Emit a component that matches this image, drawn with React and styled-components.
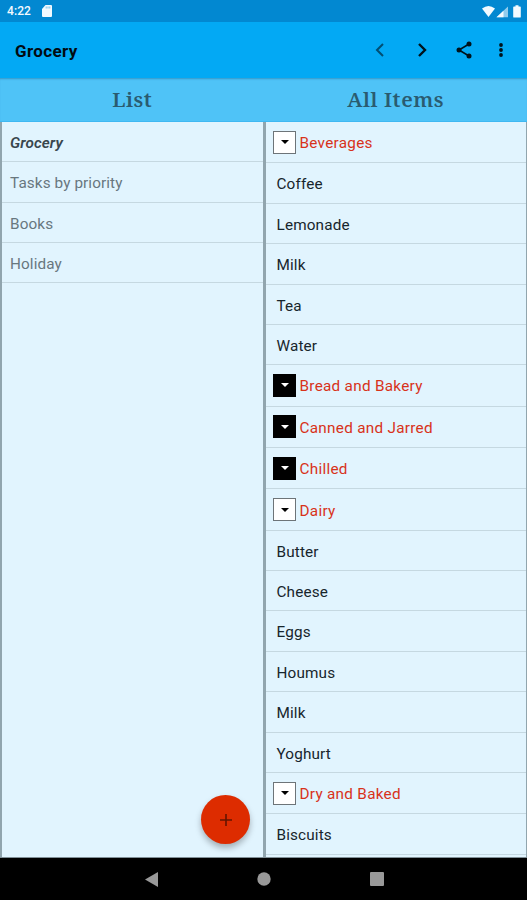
import React from "react";
import styled, { createGlobalStyle } from "styled-components";

const GlobalStyle = createGlobalStyle`
  * {
    box-sizing: border-box;
  }
  body {
    margin: 0;
    font-family: Roboto, sans-serif;
    background: #000;
  }
`;

const Screen = styled.div`
  display: flex;
  flex-direction: column;
  width: 527px;
  height: 900px;
  overflow: hidden;
`;

const StatusBar = styled.div`
  display: flex;
  align-items: center;
  flex: 0 0 22px;
  padding: 0 6px 0 7px;
  background: #0288d1;
  color: #f2faff;
`;

const Clock = styled.span`
  width: 35px;
  font-size: 12px;
  font-weight: 500;
  line-height: 22px;
  letter-spacing: 0.1px;
`;

const StatusIcons = styled.div`
  display: flex;
  align-items: center;
  margin-left: auto;
`;

const Toolbar = styled.header`
  display: flex;
  align-items: center;
  flex: 0 0 56px;
  padding: 0 10px 0 15px;
  background: #03a9f4;
`;

const Title = styled.h1`
  flex: 1;
  margin: 1px 0 0;
  font-size: 17px;
  font-weight: 700;
  letter-spacing: 0.35px;
  color: #020b12;
`;

const ToolButton = styled.button`
  display: flex;
  align-items: center;
  justify-content: center;
  width: ${(p) => p.$width || 42}px;
  height: 42px;
  padding: 0;
  border: 0;
  background: none;
  color: #00131c;
  opacity: ${(p) => (p.disabled ? 0.6 : 1)};
`;

const Headings = styled.div`
  display: grid;
  grid-template-columns: 1fr 1fr;
  flex: 0 0 44px;
  background: #4fc3f7;
  border-bottom: 1px solid #3fb8f2;
  box-shadow: inset 0 2px 2px -1px rgba(0, 70, 110, 0.35);
`;

const Heading = styled.h2`
  margin: 0;
  padding-left: 1px;
  text-align: center;
  font-family: "Noto Serif", "DejaVu Serif", serif;
  font-size: 20.7px;
  font-weight: 600;
  line-height: 43px;
  letter-spacing: 0.55px;
  color: #2a5b70;
`;

const Panes = styled.main`
  display: flex;
  flex: 1;
  min-height: 0;
  background: #e1f4fe;
  border-bottom: 1px solid #819097;
`;

const Pane = styled.section`
  position: relative;
  width: ${(p) => p.$width}px;
  overflow: hidden;
  border: solid #91a5ae;
  border-width: 0 1px 0 2px;
`;

const ListRow = styled.div`
  height: 40.3px;
  padding-left: 8px;
  border-bottom: 1px solid #c5d8e1;
  font-size: 15.3px;
  line-height: 43px;
  letter-spacing: 0.1px;
  color: #68777e;

  &:first-child {
    font-weight: ${(p) => (p.$active ? 600 : 400)};
    font-style: ${(p) => (p.$active ? "italic" : "normal")};
    color: #39464d;
  }
`;

const ItemRow = styled.div`
  height: 40.4px;
  padding-left: 10.5px;
  border-bottom: 1px solid #c5d8e1;
  font-size: 15.3px;
  line-height: 43px;
  letter-spacing: 0.15px;
  color: #17252c;
`;

const CategoryRow = styled.div`
  display: flex;
  align-items: center;
  gap: 3.5px;
  height: 41.35px;
  padding-left: 7px;
  border-bottom: 1px solid #c5d8e1;
  font-size: 15.3px;
  line-height: 20px;
  letter-spacing: 0.28px;
  color: #d8321a;
`;

const Label = styled.span`
  padding-top: 2px;
`;

const Toggle = styled.span`
  display: flex;
  align-items: center;
  justify-content: center;
  width: 23px;
  height: 23px;
  border: 1px solid ${(p) => (p.$collapsed ? "#000" : "#6d7478")};
  background: ${(p) => (p.$collapsed ? "#000" : "#fff")};
  color: ${(p) => (p.$collapsed ? "#fff" : "#000")};
`;

const AddButton = styled.button`
  position: absolute;
  right: 13px;
  bottom: 13px;
  display: flex;
  align-items: center;
  justify-content: center;
  width: 49px;
  height: 49px;
  padding: 0;
  border: 0;
  border-radius: 50%;
  background: #dd2c00;
  box-shadow: 0 4px 6px rgba(0, 0, 0, 0.28);
`;

const NavBar = styled.nav`
  display: flex;
  align-items: center;
  justify-content: center;
  gap: 99px;
  flex: 0 0 42px;
  padding: 0 0 0 1px;
  background: #000;
  color: #999;
`;

const lists = ["Grocery", "Tasks by priority", "Books", "Holiday"];

const categories = [
  { name: "Beverages", items: ["Coffee", "Lemonade", "Milk", "Tea", "Water"] },
  { name: "Bread and Bakery", items: [] },
  { name: "Canned and Jarred", items: [] },
  { name: "Chilled", items: [] },
  {
    name: "Dairy",
    items: ["Butter", "Cheese", "Eggs", "Houmus", "Milk", "Yoghurt"],
  },
  { name: "Dry and Baked", items: ["Biscuits"] },
];

function Category({ name, items }) {
  return (
    <>
      <CategoryRow>
        <Toggle $collapsed={items.length === 0}>
          <svg width="8" height="4" viewBox="0 0 8 4">
            <path d="M0 0h8L4 4z" fill="currentColor" />
          </svg>
        </Toggle>
        <Label>{name}</Label>
      </CategoryRow>
      {items.map((item) => (
        <ItemRow key={item}>{item}</ItemRow>
      ))}
    </>
  );
}

function App() {
  return (
    <Screen>
      <GlobalStyle />
      <StatusBar>
        <Clock>4:22</Clock>
        <svg width="10" height="12" viewBox="0 0 10 12">
          <path d="M3.5 0H9q1 0 1 1v10q0 1-1 1H1q-1 0-1-1V4z" fill="currentColor" />
          <path d="M4.2 1.5v2M6 1.5v2M7.8 1.5v2" stroke="#0288d1" strokeWidth=".5" />
        </svg>
        <StatusIcons>
          <svg width="39" height="13" viewBox="0 0 39 13">
            <path d="M0 3.5Q6.5-1.5 13 3.5L6.5 12z" fill="currentColor" />
            <path d="M14.5 12.3L26 1.5v10.8z" fill="currentColor" opacity=".6" />
            <path d="M14.5 12.3l7-6.6v6.6z" fill="currentColor" />
            <path d="M32 1.5h1.5V.3h3v1.2H38q.8 0 .8.8v9.4q0 .9-.8.9h-6q-.8 0-.8-.9V2.3q0-.8.8-.8z" fill="currentColor" />
          </svg>
        </StatusIcons>
      </StatusBar>
      <Toolbar>
        <Title>Grocery</Title>
        <ToolButton disabled aria-label="Previous">
          <svg width="10" height="14" viewBox="0 0 10 14">
            <path d="M8 1L2 7l6 6" fill="none" stroke="currentColor" strokeWidth="2" />
          </svg>
        </ToolButton>
        <ToolButton aria-label="Next">
          <svg width="10" height="14" viewBox="0 0 10 14">
            <path d="M2 1l6 6-6 6" fill="none" stroke="currentColor" strokeWidth="2.4" />
          </svg>
        </ToolButton>
        <ToolButton aria-label="Share">
          <svg width="16" height="18" viewBox="0 0 16 18">
            <path d="M13 3L3 9l10 6" fill="none" stroke="currentColor" strokeWidth="1.6" />
            <circle cx="13" cy="3" r="2.5" fill="currentColor" />
            <circle cx="3" cy="9" r="2.5" fill="currentColor" />
            <circle cx="13" cy="15" r="2.5" fill="currentColor" />
          </svg>
        </ToolButton>
        <ToolButton $width={32} aria-label="More">
          <svg width="4" height="14" viewBox="0 0 4 14">
            <circle cx="2" cy="2" r="1.9" fill="currentColor" />
            <circle cx="2" cy="7" r="1.9" fill="currentColor" />
            <circle cx="2" cy="12" r="1.9" fill="currentColor" />
          </svg>
        </ToolButton>
      </Toolbar>
      <Headings>
        <Heading>List</Heading>
        <Heading>All Items</Heading>
      </Headings>
      <Panes>
        <Pane $width={264}>
          {lists.map((name) => (
            <ListRow key={name} $active={name === "Grocery"}>
              {name}
            </ListRow>
          ))}
          <AddButton aria-label="Add">
            <svg width="12" height="12" viewBox="0 0 12 12">
              <path d="M6 0v12M0 6h12" stroke="#641400" strokeWidth="1.6" />
            </svg>
          </AddButton>
        </Pane>
        <Pane $width={263}>
          {categories.map((c) => (
            <Category key={c.name} name={c.name} items={c.items} />
          ))}
        </Pane>
      </Panes>
      <NavBar>
        <svg width="13" height="15" viewBox="0 0 13 15">
          <path d="M13 0v15L0 7.5z" fill="currentColor" />
        </svg>
        <svg width="14" height="14" viewBox="0 0 14 14">
          <circle cx="7" cy="7" r="6.7" fill="currentColor" />
        </svg>
        <svg width="14" height="14" viewBox="0 0 14 14">
          <rect width="14" height="14" rx="1" fill="currentColor" />
        </svg>
      </NavBar>
    </Screen>
  );
}

export default App;
